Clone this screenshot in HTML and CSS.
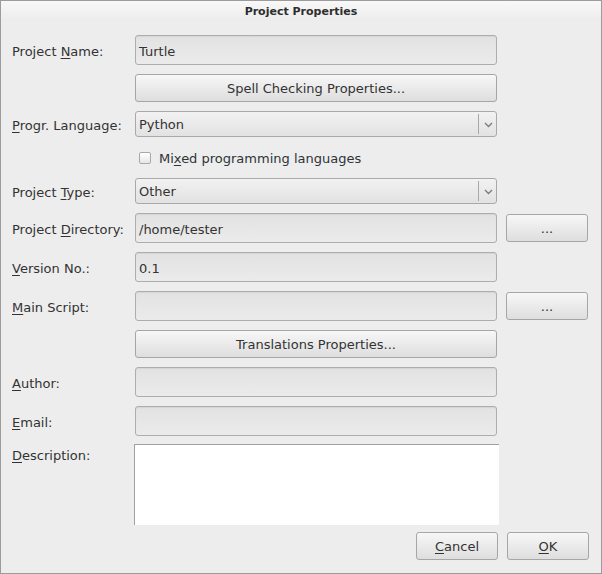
FILE: index.html
```html
<!DOCTYPE html>
<html>
<head>
<meta charset="utf-8">
<link rel="stylesheet" href="styles.css">
</head>
<body>
<div class="window">
  <div class="titlebar">Project Properties</div>
  <div class="content">
    <div class="row h30">
      <div class="label">Project <u>N</u>ame:</div>
      <div class="field input">Turtle</div>
    </div>
    <div class="row h28">
      <div class="label"></div>
      <div class="field button">Spell Checking Properties...</div>
    </div>
    <div class="row h26">
      <div class="label"><u>P</u>rogr. Language:</div>
      <div class="field combo"><span class="combo-text">Python</span><span class="combo-sep"></span><svg class="chev" width="9" height="6" viewBox="0 0 9 6"><path d="M1 1 L4.5 4.5 L8 1" fill="none" stroke="#7a7a7a" stroke-width="1.3"/></svg></div>
    </div>
    <div class="row h23">
      <div class="label"></div>
      <div class="check"><span class="box"></span><span>Mi<u>x</u>ed programming languages</span></div>
    </div>
    <div class="row h26">
      <div class="label">Project <u>T</u>ype:</div>
      <div class="field combo"><span class="combo-text">Other</span><span class="combo-sep"></span><svg class="chev" width="9" height="6" viewBox="0 0 9 6"><path d="M1 1 L4.5 4.5 L8 1" fill="none" stroke="#7a7a7a" stroke-width="1.3"/></svg></div>
    </div>
    <div class="row h30">
      <div class="label">Project <u>D</u>irectory:</div>
      <div class="field input">/home/tester</div>
      <div class="button small">...</div>
    </div>
    <div class="row h30">
      <div class="label"><u>V</u>ersion No.:</div>
      <div class="field input">0.1</div>
    </div>
    <div class="row h30">
      <div class="label"><u>M</u>ain Script:</div>
      <div class="field input"></div>
      <div class="button small">...</div>
    </div>
    <div class="row h28">
      <div class="label"></div>
      <div class="field button">Translations Properties...</div>
    </div>
    <div class="row h30">
      <div class="label"><u>A</u>uthor:</div>
      <div class="field input"></div>
    </div>
    <div class="row h30">
      <div class="label"><u>E</u>mail:</div>
      <div class="field input"></div>
    </div>
    <div class="row desc-row">
      <div class="label top"><u>D</u>escription:</div>
      <div class="textarea"></div>
    </div>
    <div class="actions">
      <div class="button small"><u>C</u>ancel</div>
      <div class="button small"><u>O</u>K</div>
    </div>
  </div>
</div>
</body>
</html>
```
FILE: styles.css
```css
html, body {
  margin: 0;
  padding: 0;
  background: #ededed;
}
body {
  font-family: "DejaVu Sans", "Liberation Sans", sans-serif;
  font-size: 13px;
  color: #2e3436;
}
u {
  text-decoration: underline;
  text-underline-offset: 2px;
  text-decoration-thickness: 1px;
}
.window {
  width: 602px;
  height: 574px;
  box-sizing: border-box;
  border: 1px solid #9c9c9c;
  background: #ededed;
  display: flex;
  flex-direction: column;
}
.titlebar {
  height: 20px;
  line-height: 22px;
  text-align: center;
  font-weight: bold;
  font-size: 11px;
  color: #2e2e2e;
  background: linear-gradient(#f8f8f8, #ececec);
}
.content {
  padding: 14px 0 0 11px;
  display: flex;
  flex-direction: column;
  gap: 9px;
}
.row {
  display: flex;
  align-items: center;
}
.h30 { height: 30px; }
.h28 { height: 28px; }
.h26 { height: 26px; }
.h23 { height: 23px; }
.label {
  width: 123px;
  flex: none;
  color: #333;
  white-space: nowrap;
  padding-top: 2px;
}
.label.top {
  align-self: flex-start;
  padding-top: 4px;
}
.field {
  width: 362px;
  box-sizing: border-box;
  flex: none;
}
.input {
  height: 30px;
  border: 1px solid #adadad;
  border-radius: 3px;
  background: linear-gradient(#e2e2e2, #ebebeb);
  box-shadow: inset 0 1px 1px rgba(0,0,0,0.06);
  padding: 2px 0 0 3px;
  display: flex;
  align-items: center;
  color: #333;
}
.button {
  height: 28px;
  border: 1px solid #a6a6a6;
  border-radius: 3px;
  background: linear-gradient(#f7f7f7, #dedede);
  box-sizing: border-box;
  display: flex;
  align-items: center;
  justify-content: center;
  color: #333;
  padding-top: 1px;
}
.button.small {
  width: 82px;
  margin-left: 9px;
  flex: none;
}
.combo {
  height: 26px;
  border: 1px solid #a9a9a9;
  border-radius: 3px;
  background: linear-gradient(#f2f2f2, #e2e2e2);
  display: flex;
  align-items: center;
  padding-left: 3px;
  color: #333;
}
.combo-text {
  flex: 1;
  padding-top: 1px;
}
.combo-sep {
  width: 1px;
  height: 20px;
  background: #a8a8a8;
  margin-right: 5px;
}
.chev {
  margin-right: 3px;
  margin-top: 1px;
}
.check {
  display: flex;
  align-items: center;
  margin-left: 4px;
  padding-top: 1px;
}
.box {
  width: 10px;
  height: 10px;
  border: 1px solid #a8a8a8;
  border-radius: 2px;
  background: linear-gradient(#ffffff, #e6e6e6);
  margin-right: 8px;
}
.desc-row {
  height: 81px;
  align-items: stretch;
  margin-top: -1px;
}
.textarea {
  width: 364px;
  margin-left: -1px;
  background: #ffffff;
  border-top: 1px solid #a0a0a0;
  border-left: 1px solid #a0a0a0;
}
.actions {
  display: flex;
  justify-content: flex-end;
  width: 577px;
  margin-top: -2px;
}
.actions .button.small:first-child {
  margin-left: 0;
}
```
